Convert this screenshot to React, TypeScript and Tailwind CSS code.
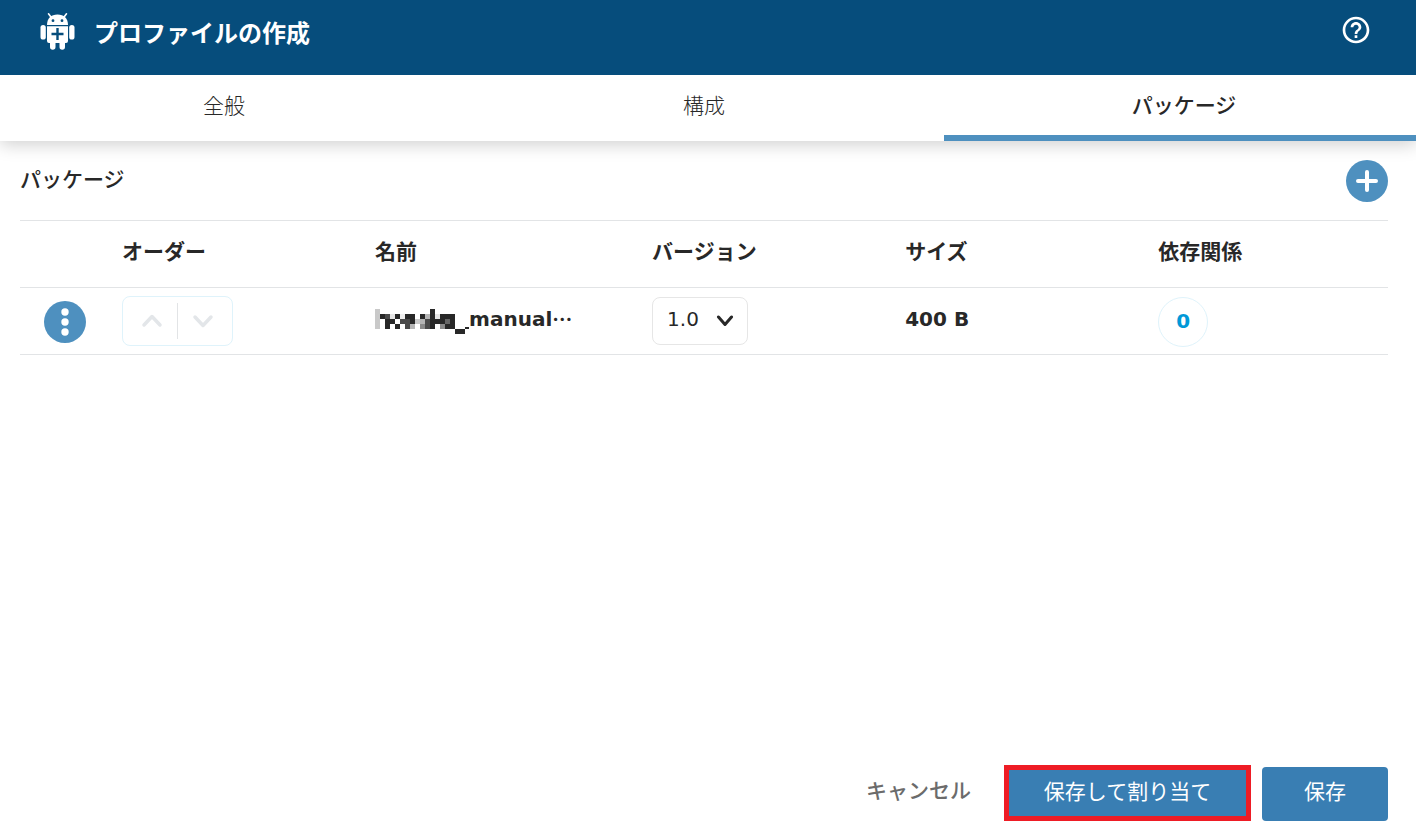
import { MdHelpOutline } from "react-icons/md";

const tabs = [
  { label: "全般", active: false },
  { label: "構成", active: false },
  { label: "パッケージ", active: true },
];

const columns = ["オーダー", "名前", "バージョン", "サイズ", "依存関係"];

// Pixelated part of the package name, one entry per 5px cell: [x, y, shade]
const mosaic: [number, number, string][] = [
  [0, 0, "#c9c9c9"], [0, 1, "#c9c9c9"], [0, 2, "#c9c9c9"], [0, 3, "#c9c9c9"],
  [1, 1, "#282828"], [2, 1, "#4a4a4a"], [3, 1, "#e6e6e6"], [4, 1, "#282828"],
  [5, 1, "#eeeeee"], [6, 1, "#282828"], [7, 1, "#282828"], [9, 1, "#282828"],
  [10, 1, "#b5b5b5"], [11, 0, "#282828"], [11, 1, "#282828"], [12, 1, "#e6e6e6"],
  [13, 1, "#282828"], [14, 1, "#282828"], [15, 1, "#282828"],
  [2, 2, "#282828"], [3, 2, "#282828"], [5, 2, "#4a4a4a"], [6, 2, "#4a4a4a"],
  [7, 2, "#282828"], [8, 2, "#c9c9c9"], [9, 2, "#b5b5b5"], [10, 2, "#4a4a4a"],
  [11, 2, "#282828"], [12, 2, "#282828"], [13, 2, "#282828"], [14, 2, "#666666"],
  [15, 2, "#282828"], [2, 3, "#282828"], [4, 3, "#282828"], [6, 3, "#4a4a4a"],
  [7, 3, "#b5b5b5"], [9, 3, "#8a8a8a"], [10, 3, "#4a4a4a"], [11, 3, "#282828"],
  [13, 3, "#8a8a8a"], [14, 3, "#282828"], [15, 3, "#282828"],
  [16, 4, "#282828"], [17, 4, "#282828"],
];

function AndroidIcon() {
  return (
    <svg width="36" height="38" viewBox="0 0 36 38" fill="#fff" aria-hidden="true">
      <path d="M8.500 1.800l3 4M26.500 1.800l-3 4" stroke="#fff" strokeWidth="1.600" strokeLinecap="round" />
      <path d="M7 13C7 6.500 11 2.500 17.500 2.500S28 6.500 28 13z" />
      <path d="M7 14.300h21V29a2 2 0 0 1-2 2h-1v4a2 2 0 0 1-5.500 0v-4h-4v4a2 2 0 0 1-5.500 0v-4H9a2 2 0 0 1-2-2z" />
      <rect x="0.500" y="13" width="5.300" height="14.500" rx="2.600" />
      <rect x="29.200" y="13" width="5.300" height="14.500" rx="2.600" />
      <circle cx="13" cy="8.700" r="1.400" fill="#064d7c" />
      <circle cx="22" cy="8.700" r="1.400" fill="#064d7c" />
      <path d="M17.500 16v12M11.500 22h12" stroke="#064d7c" strokeWidth="2.400" />
    </svg>
  );
}

function Chevron({ up = false }: { up?: boolean }) {
  return (
    <svg width="22" height="16" viewBox="0 0 22 16" fill="none" stroke="currentColor" strokeWidth="3.500" strokeLinecap="round" strokeLinejoin="round" aria-hidden="true">
      <path d={up ? "M3 12l8-8.500 8 8.500" : "M3 4l8 8.500 8-8.500"} />
    </svg>
  );
}

export default function App() {
  return (
    <div className="flex min-h-screen flex-col bg-white font-['DejaVu_Sans','Noto_Sans_CJK_JP',sans-serif] text-[21px] leading-8 text-[#282828]">
      <header className="relative z-10 flex h-[75px] items-start justify-between bg-[#064d7c] pt-3 pr-11 pl-10 text-white">
        <div className="flex items-start gap-[18px]">
          <AndroidIcon />
          <h1 className="pt-1 text-2xl leading-9 font-bold">プロファイルの作成</h1>
        </div>
        <button type="button" aria-label="ヘルプ" className="pt-0.5">
          <MdHelpOutline size={32} />
        </button>
      </header>

      <div className="overflow-x-clip shadow-[0_4px_16px_rgba(0,0,0,0.18)]">
        <nav className="-mr-2 -ml-4 grid h-[66px] grid-cols-3">
          {tabs.map((tab) => (
            <button
              key={tab.label}
              type="button"
              className={
                tab.active
                  ? "border-b-6 border-[#4e90bf] pt-0.5 font-medium"
                  : "border-b-6 border-transparent pt-0.5 font-light"
              }
            >
              {tab.label}
            </button>
          ))}
        </nav>
      </div>

      <main className="flex-1 pr-7 pl-5">
        <div className="flex h-[79px] items-center justify-between">
          <h2 className="pb-0.5 font-medium">パッケージ</h2>
          <button type="button" aria-label="追加" className="flex size-[42px] items-center justify-center rounded-full bg-[#4e90bf]">
            <svg width="24" height="24" viewBox="0 0 24 24" stroke="#fff" strokeWidth="4" strokeLinecap="round" aria-hidden="true">
              <path d="M12 3v18M3 12h18" />
            </svg>
          </button>
        </div>

        <table className="w-full table-fixed border-collapse text-left">
          <colgroup>
            <col className="w-[102px]" />
            <col className="w-[18.5%]" />
            <col className="w-[20.25%]" />
            <col className="w-[18.5%]" />
            <col className="w-[18.5%]" />
            <col />
          </colgroup>
          <thead>
            <tr className="h-[67px] border-y border-[#e2e4e6]">
              <td />
              {columns.map((column) => (
                <th key={column} scope="col" className="p-0 pb-1 font-bold">
                  {column}
                </th>
              ))}
            </tr>
          </thead>
          <tbody>
            <tr className="h-[67px] border-b border-[#e2e4e6] text-xl font-bold">
              <td className="p-0 pt-0.5 pl-6">
                <button type="button" aria-label="メニュー" className="flex size-[42px] items-center justify-center rounded-full bg-[#4e90bf]">
                  <svg width="8" height="28" viewBox="0 0 8 28" fill="#fff" aria-hidden="true">
                    <circle cx="4" cy="4" r="3.700" />
                    <circle cx="4" cy="14" r="3.700" />
                    <circle cx="4" cy="24" r="3.700" />
                  </svg>
                </button>
              </td>
              <td className="p-0">
                <div className="flex h-[50px] w-[111px] items-center rounded-lg border border-[#dff3fb] text-[#e3e6e9]">
                  <button type="button" disabled aria-label="上へ" className="flex h-9 flex-1 items-center justify-center border-r border-[#e2e4e6] pl-1">
                    <Chevron up />
                  </button>
                  <button type="button" disabled aria-label="下へ" className="flex h-9 flex-1 items-center justify-center pr-1">
                    <Chevron />
                  </button>
                </div>
              </td>
              <td className="p-0">
                <div className="flex items-center">
                  <svg width="94" height="25" viewBox="0 0 94 25" shapeRendering="crispEdges" aria-hidden="true">
                    {mosaic.map(([x, y, shade]) => (
                      <rect key={`${x}-${y}`} x={x * 5} y={y * 5} width="5" height="5" fill={shade} />
                    ))}
                    <rect x="90" y="18" width="4" height="2" fill="#282828" />
                  </svg>
                  <span className="pb-1">manual</span>
                  <span className="pb-1 font-['Noto_Sans_CJK_JP',sans-serif]">…</span>
                </div>
              </td>
              <td className="p-0">
                <div className="relative w-24">
                  <select aria-label="バージョン" className="h-12 w-full appearance-none rounded-lg border border-[#e6e6e6] bg-white pb-1 pl-3.5 font-normal">
                    <option>1.0</option>
                  </select>
                  <span className="pointer-events-none absolute inset-y-0 right-3.5 flex items-center">
                    <svg width="18" height="12" viewBox="0 0 18 12" fill="none" stroke="currentColor" strokeWidth="3" strokeLinecap="round" strokeLinejoin="round" aria-hidden="true">
                      <path d="M2.500 2l6.500 7.500L15.500 2" />
                    </svg>
                  </span>
                </div>
              </td>
              <td className="p-0 pb-1">400 B</td>
              <td className="p-0 pt-0.5">
                <button type="button" className="flex size-[50px] items-center justify-center rounded-full border border-[#dff3fb] pb-0.5 text-[#0099d8]">
                  0
                </button>
              </td>
            </tr>
          </tbody>
        </table>
      </main>

      <footer className="flex items-end justify-end pr-7 pb-[11px]">
        <button type="button" className="mr-[33px] h-14 pb-1 font-medium text-[#6b6b6b]">キャンセル</button>
        <button type="button" className="mr-[11px] h-14 w-[247px] border-5 border-[#ee1c25] bg-[#397eb3] pb-0.5 text-white">
          保存して割り当て
        </button>
        <button type="button" className="h-[54px] w-[126px] rounded bg-[#397eb3] pb-1 text-white">保存</button>
      </footer>
    </div>
  );
}
